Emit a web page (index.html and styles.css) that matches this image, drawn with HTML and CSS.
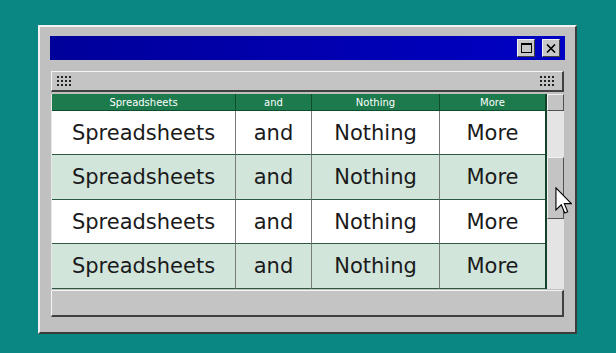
FILE: index.html
```html
<!DOCTYPE html>
<html lang="en">
<head>
    <meta charset="UTF-8">
    <meta name="viewport" content="width=device-width, initial-scale=1.0">
    <title>Spreadsheets and Nothing More</title>
    <link rel="stylesheet" href="styles.css">
</head>
<body>
    <div class="window">
        <div class="titlebar">
            <button class="title-btn" aria-label="Maximize">
                <svg width="11" height="10" viewBox="0 0 11 10"><rect x="0.5" y="0.5" width="10" height="9" fill="none" stroke="#000"/><rect x="0" y="0" width="11" height="2" fill="#000"/></svg>
            </button>
            <button class="title-btn" aria-label="Close">
                <svg width="10" height="9" viewBox="0 0 10 9"><path d="M1 0.5 L9 8.5 M9 0.5 L1 8.5" stroke="#000" stroke-width="1.6"/></svg>
            </button>
        </div>

        <div class="panel">
            <div class="strip">
                <svg class="grip" width="16" height="10" viewBox="0 0 16 10"><g fill="#222"><rect x="0" y="0" width="2" height="2"/><rect x="4" y="0" width="2" height="2"/><rect x="8" y="0" width="2" height="2"/><rect x="12" y="0" width="2" height="2"/><rect x="0" y="4" width="2" height="2"/><rect x="4" y="4" width="2" height="2"/><rect x="8" y="4" width="2" height="2"/><rect x="12" y="4" width="2" height="2"/><rect x="0" y="8" width="2" height="2"/><rect x="4" y="8" width="2" height="2"/><rect x="8" y="8" width="2" height="2"/><rect x="12" y="8" width="2" height="2"/></g></svg>
                <svg class="grip" width="16" height="10" viewBox="0 0 16 10"><g fill="#222"><rect x="0" y="0" width="2" height="2"/><rect x="4" y="0" width="2" height="2"/><rect x="8" y="0" width="2" height="2"/><rect x="12" y="0" width="2" height="2"/><rect x="0" y="4" width="2" height="2"/><rect x="4" y="4" width="2" height="2"/><rect x="8" y="4" width="2" height="2"/><rect x="12" y="4" width="2" height="2"/><rect x="0" y="8" width="2" height="2"/><rect x="4" y="8" width="2" height="2"/><rect x="8" y="8" width="2" height="2"/><rect x="12" y="8" width="2" height="2"/></g></svg>
            </div>

            <div class="grid-wrap">
                <div class="sheet">
                    <div class="head">Spreadsheets</div>
                    <div class="head">and</div>
                    <div class="head">Nothing</div>
                    <div class="head">More</div>

                    <div class="cell">Spreadsheets</div>
                    <div class="cell">and</div>
                    <div class="cell">Nothing</div>
                    <div class="cell">More</div>

                    <div class="cell alt">Spreadsheets</div>
                    <div class="cell alt">and</div>
                    <div class="cell alt">Nothing</div>
                    <div class="cell alt">More</div>

                    <div class="cell">Spreadsheets</div>
                    <div class="cell">and</div>
                    <div class="cell">Nothing</div>
                    <div class="cell">More</div>

                    <div class="cell alt">Spreadsheets</div>
                    <div class="cell alt">and</div>
                    <div class="cell alt">Nothing</div>
                    <div class="cell alt">More</div>
                </div>
                <div class="scrollbar">
                    <div class="scroll-head"></div>
                    <div class="track">
                        <div class="thumb"></div>
                    </div>
                </div>
            </div>

            <div class="footer"></div>
        </div>

        <svg class="cursor" width="17" height="28" viewBox="0 0 12 20">
            <path d="M0.6 0.6 L0.6 16.4 L4.4 12.7 L6.9 18.6 L9 17.7 L6.6 11.9 L11.6 11.9 Z" fill="#fff" stroke="#000" stroke-width="0.8" stroke-linejoin="miter"/>
        </svg>
    </div>
</body>
</html>
```

FILE: styles.css
```css
html, body {
    margin: 0;
    padding: 0;
}
body {
    background-color: #0b8783;
    width: 616px;
    height: 353px;
    overflow: hidden;
    font-family: "DejaVu Sans", Verdana, sans-serif;
}
.window {
    position: relative;
    box-sizing: border-box;
    margin: 25px 0 0 38px;
    width: 539px;
    height: 309px;
    background-color: #c0c0c0;
    border: 2px solid;
    border-color: #f2f2f2 #3c3c3c #3c3c3c #f2f2f2;
    padding: 9px 10px 0 10px;
}
.titlebar {
    height: 24px;
    background: linear-gradient(90deg, #00009a, #0000c4);
    display: flex;
    justify-content: flex-end;
    align-items: center;
    gap: 7px;
    padding-right: 5px;
}
.title-btn {
    box-sizing: border-box;
    width: 18px;
    height: 18px;
    padding: 0;
    background-color: #c8c8c8;
    border: 1px solid;
    border-color: #f4f4f4 #404040 #404040 #f4f4f4;
    display: flex;
    align-items: center;
    justify-content: center;
}
.panel {
    margin: 11px 1px 0 1px;
}
.strip {
    box-sizing: border-box;
    height: 21px;
    background-color: #c4c4c4;
    border: 1px solid;
    border-color: #f4f4f4 #404040 #404040 #f4f4f4;
    border-width: 1px 2px 2px 1px;
    display: flex;
    justify-content: space-between;
    align-items: center;
    padding: 0 6px 0 5px;
}
.grid-wrap {
    display: flex;
    margin-top: 2px;
    border-left: 1px solid #e8e8e8;
}
.sheet {
    display: grid;
    grid-template-columns: 184px 76px 128px 105px;
    grid-template-rows: 17px 44px 45px 44px 45px;
    border-right: 2px solid #14412a;
}
.head {
    background-color: #1c7a4c;
    color: #ffffff;
    font-size: 10px;
    display: flex;
    align-items: center;
    justify-content: center;
    border-right: 1px solid #0e4a2c;
    border-bottom: 1px solid #0e4a2c;
}
.cell {
    background-color: #ffffff;
    color: #1a1a1a;
    font-size: 21px;
    display: flex;
    align-items: center;
    justify-content: center;
    border-right: 1px solid #7a7a7a;
    border-bottom: 1px solid #2b5a40;
}
.head:nth-child(4n),
.cell:nth-child(4n) {
    border-right: none;
}
.cell.alt {
    background-color: #d1e5db;
}
.scrollbar {
    width: 18px;
    display: flex;
    flex-direction: column;
}
.scroll-head {
    box-sizing: border-box;
    height: 17px;
    background-color: #c4c4c4;
    border: 1px solid;
    border-color: #f0f0f0 #505050 #505050 #f0f0f0;
}
.track {
    flex: 1;
    background-color: #e4e4e4;
    padding-top: 46px;
}
.thumb {
    box-sizing: border-box;
    height: 62px;
    background-color: #c4c4c4;
    border: 1px solid;
    border-color: #f0f0f0 #505050 #505050 #f0f0f0;
}
.footer {
    box-sizing: border-box;
    height: 27px;
    margin-top: 1px;
    background-color: #c4c4c4;
    border: 1px solid;
    border-color: #f4f4f4 #404040 #404040 #f4f4f4;
    border-width: 1px 2px 2px 1px;
}
.cursor {
    position: absolute;
    left: 515px;
    top: 160px;
}
```
